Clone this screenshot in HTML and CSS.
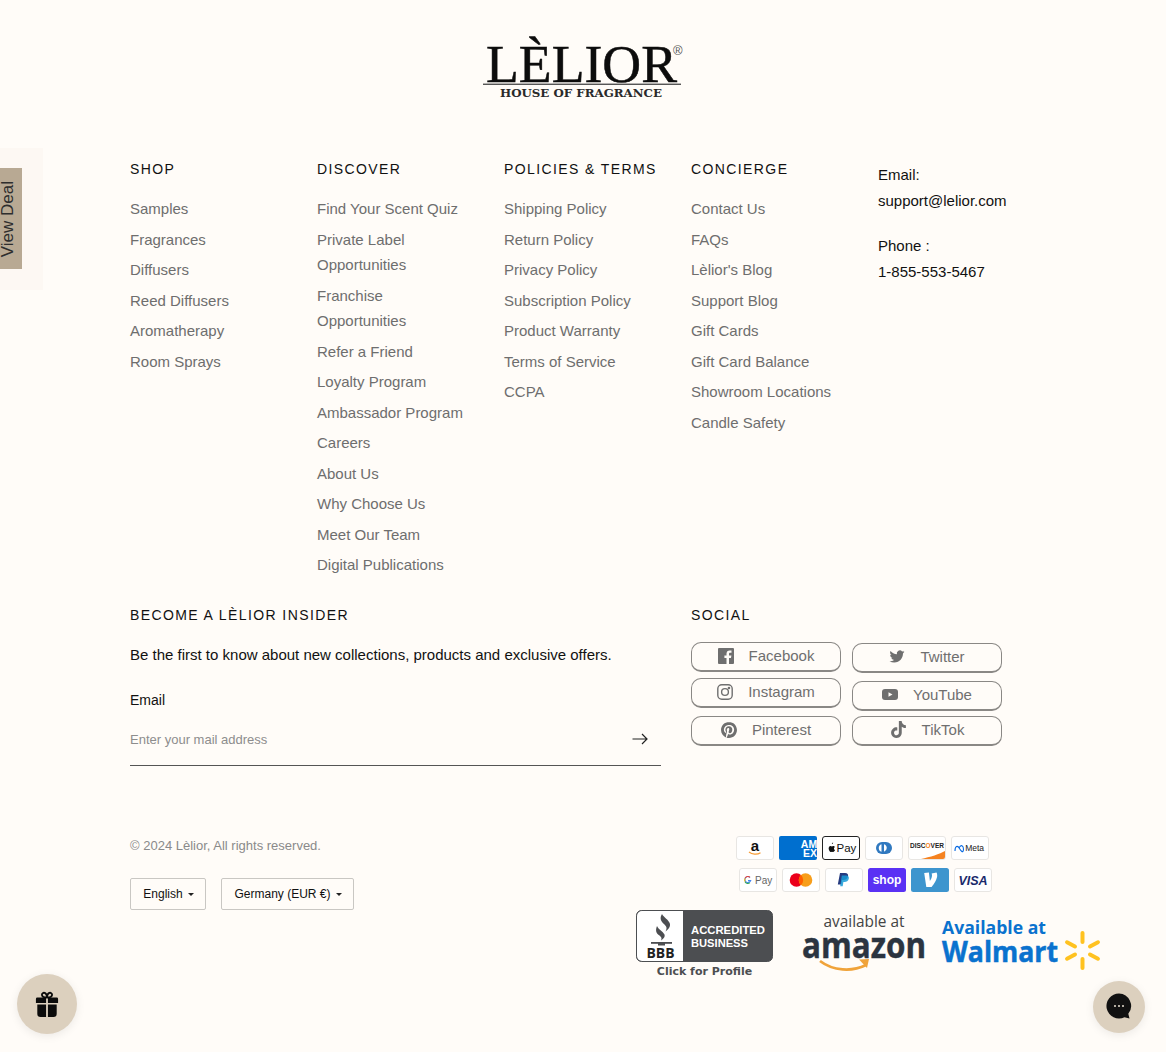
FILE: index.html
```html
<!DOCTYPE html>
<html lang="en">
<head>
<meta charset="utf-8">
<title>Lèlior footer</title>
<link rel="stylesheet" href="styles.css">
</head>
<body>
<footer class="footer">
  <div class="logo-row">
    <svg class="logo" width="204" height="64" viewBox="0 0 204 64">
      <text class="logo-main" x="5" y="46" textLength="191" lengthAdjust="spacingAndGlyphs">LÈLIOR</text>
      <text class="logo-reg" x="192" y="19">®</text>
      <rect x="2" y="47.600" width="198" height="1.300" fill="#444"/>
      <text class="logo-sub" x="19" y="61" textLength="162" lengthAdjust="spacingAndGlyphs">HOUSE OF FRAGRANCE</text>
    </svg>
  </div>

  <div class="columns">
    <nav class="col">
      <h3>SHOP</h3>
      <ul>
        <li>Samples</li><li>Fragrances</li><li>Diffusers</li><li>Reed Diffusers</li><li>Aromatherapy</li><li>Room Sprays</li>
      </ul>
    </nav>
    <nav class="col">
      <h3>DISCOVER</h3>
      <ul>
        <li>Find Your Scent Quiz</li><li>Private Label<br>Opportunities</li><li>Franchise<br>Opportunities</li><li>Refer a Friend</li><li>Loyalty Program</li><li>Ambassador Program</li><li>Careers</li><li>About Us</li><li>Why Choose Us</li><li>Meet Our Team</li><li>Digital Publications</li>
      </ul>
    </nav>
    <nav class="col">
      <h3>POLICIES &amp; TERMS</h3>
      <ul>
        <li>Shipping Policy</li><li>Return Policy</li><li>Privacy Policy</li><li>Subscription Policy</li><li>Product Warranty</li><li>Terms of Service</li><li>CCPA</li>
      </ul>
    </nav>
    <nav class="col">
      <h3>CONCIERGE</h3>
      <ul>
        <li>Contact Us</li><li>FAQs</li><li>Lèlior's Blog</li><li>Support Blog</li><li>Gift Cards</li><li>Gift Card Balance</li><li>Showroom Locations</li><li>Candle Safety</li>
      </ul>
    </nav>
    <div class="col contact">
      <p>Email:<br>support@lelior.com</p>
      <p>Phone :<br>1-855-553-5467</p>
    </div>
  </div>

  <div class="insider-row">
    <section class="insider">
      <h3>BECOME A LÈLIOR INSIDER</h3>
      <p class="insider-text">Be the first to know about new collections, products and exclusive offers.</p>
      <div class="email-label">Email</div>
      <div class="email-field">
        <span class="placeholder">Enter your mail address</span>
        <svg width="16" height="12" viewBox="0 0 16 12" fill="none" stroke="#222" stroke-width="1.2"><path d="M0.5 6H15M10 1l5 5-5 5"/></svg>
      </div>
    </section>
    <section class="social">
      <h3>SOCIAL</h3>
      <div class="social-cols">
        <div class="social-col">
          <div class="sbtn">
            <svg width="16" height="16" viewBox="0 0 16 16"><path fill="#6f6f6f" d="M0 1a1 1 0 011-1h14a1 1 0 011 1v14a1 1 0 01-1 1h-4V10h2l.4-2.5H11V6c0-.8.3-1.2 1.2-1.2h1.3V2.5c-.4 0-1-.1-1.8-.1-2 0-3.2 1.2-3.2 3.3v1.8H6.400V10h2.100v6H1a1 1 0 01-1-1z"/></svg>
            <span>Facebook</span>
          </div>
          <div class="sbtn sbtn-second">
            <svg width="16" height="16" viewBox="0 0 16 16" fill="none" stroke="#6f6f6f" stroke-width="1.4"><rect x=".8" y=".8" width="14.400" height="14.400" rx="4"/><circle cx="8" cy="8" r="3.400"/><circle cx="12" cy="4" r=".6" fill="#6f6f6f"/></svg>
            <span>Instagram</span>
          </div>
          <div class="sbtn sbtn-third">
            <svg width="16" height="16" viewBox="0 0 24 24"><path fill="#6f6f6f" d="M12.017 0C5.396 0 .029 5.367.029 11.987c0 5.079 3.158 9.417 7.618 11.162-.105-.949-.199-2.403.041-3.439.219-.937 1.406-5.957 1.406-5.957s-.359-.72-.359-1.781c0-1.663.967-2.911 2.168-2.911 1.024 0 1.518.769 1.518 1.688 0 1.029-.653 2.567-.992 3.992-.285 1.193.6 2.165 1.775 2.165 2.128 0 3.768-2.245 3.768-5.487 0-2.861-2.063-4.869-5.008-4.869-3.41 0-5.409 2.562-5.409 5.199 0 1.033.394 2.143.889 2.741.099.12.112.225.085.345-.09.375-.293 1.199-.334 1.363-.053.225-.172.271-.401.165-1.495-.69-2.433-2.878-2.433-4.646 0-3.776 2.748-7.252 7.92-7.252 4.158 0 7.392 2.967 7.392 6.923 0 4.135-2.607 7.462-6.233 7.462-1.214 0-2.354-.629-2.758-1.379l-.749 2.848c-.269 1.045-1.004 2.352-1.498 3.146 1.123.345 2.306.535 3.55.535 6.607 0 11.985-5.365 11.985-11.987C23.97 5.39 18.592.026 11.985.026L12.017 0z"/></svg>
            <span>Pinterest</span>
          </div>
        </div>
        <div class="social-col social-col-right">
          <div class="sbtn">
            <svg width="16" height="15" viewBox="0 0 24 24"><path fill="#6f6f6f" d="M23.953 4.57a10 10 0 01-2.825.775 4.958 4.958 0 002.163-2.723c-.951.555-2.005.959-3.127 1.184a4.92 4.92 0 00-8.384 4.482C7.69 8.095 4.067 6.13 1.64 3.162a4.822 4.822 0 00-.666 2.475c0 1.71.87 3.213 2.188 4.096a4.904 4.904 0 01-2.228-.616v.06a4.923 4.923 0 003.946 4.827 4.996 4.996 0 01-2.212.085 4.936 4.936 0 004.604 3.417 9.867 9.867 0 01-6.102 2.105c-.39 0-.779-.023-1.17-.067a13.995 13.995 0 007.557 2.209c9.053 0 13.998-7.496 13.998-13.985 0-.21 0-.42-.015-.63A9.935 9.935 0 0024 4.59z"/></svg>
            <span>Twitter</span>
          </div>
          <div class="sbtn sbtn-yt">
            <svg width="16" height="11" viewBox="0 0 16 11"><rect width="16" height="11" rx="3" fill="#6f6f6f"/><path d="M6.500 3.200v4.600L10.500 5.500z" fill="#fffcf8"/></svg>
            <span>YouTube</span>
          </div>
          <div class="sbtn sbtn-tt">
            <svg width="17" height="17" viewBox="0 0 24 24"><path fill="#6f6f6f" d="M12.525.02c1.31-.02 2.61-.01 3.91-.02.08 1.53.63 3.09 1.75 4.17 1.12 1.11 2.7 1.62 4.24 1.79v4.03c-1.44-.05-2.89-.35-4.2-.97-.57-.26-1.1-.59-1.62-.93-.01 2.92.01 5.84-.02 8.75-.08 1.4-.54 2.79-1.35 3.94-1.31 1.92-3.58 3.17-5.91 3.21-1.43.08-2.86-.31-4.08-1.03-2.02-1.19-3.44-3.37-3.65-5.71-.02-.5-.03-1-.01-1.49.18-1.9 1.12-3.72 2.58-4.96 1.66-1.44 3.98-2.13 6.15-1.72.02 1.48-.04 2.96-.04 4.44-.99-.32-2.15-.23-3.02.37-.63.41-1.11 1.04-1.36 1.75-.21.51-.15 1.07-.14 1.61.24 1.64 1.82 3.02 3.5 2.87 1.12-.01 2.19-.66 2.77-1.61.19-.33.4-.67.41-1.06.1-1.79.06-3.57.07-5.36.01-4.03-.01-8.05.02-12.07z"/></svg>
            <span>TikTok</span>
          </div>
        </div>
      </div>
    </section>
  </div>

  <div class="bottom">
    <div class="legal">
      <div class="copyright">© 2024 Lèlior, All rights reserved.</div>
      <div class="selects">
        <div class="select select-lang">English <i class="caret"></i></div>
        <div class="select select-country">Germany (EUR €) <i class="caret"></i></div>
      </div>
    </div>
    <div class="trust">
      <div class="pay-row">
        <svg class="pay" viewBox="0 0 38 24"><rect class="card" x=".5" y=".5" width="37" height="23" rx="2.500"/><text x="19" y="14.500" class="t-amz">a</text><path d="M13 16c3 2.500 8 3 11.500.8" fill="none" stroke="#f79c34" stroke-width="1.300"/></svg>
        <svg class="pay" viewBox="0 0 38 24"><rect width="38" height="24" rx="2" fill="#006fcf"/><text x="30" y="12" class="t-amex">AM</text><text x="31" y="21" class="t-amex">EX</text></svg>
        <svg class="pay" viewBox="0 0 38 24"><rect x=".5" y=".5" width="37" height="23" rx="2.500" fill="#fff" stroke="#222"/><path d="M10.200 8.100c.5-.1 1-.7.9-1.500-.7.100-1.300.7-1.200 1.500zm1.800 4.300c0-1 .8-1.400.9-1.500-.5-.7-1.200-.8-1.500-.8-.6-.1-1.200.4-1.500.4-.3 0-.8-.4-1.300-.4-.7 0-1.300.4-1.600 1-.7 1.200-.2 3 .5 3.900.3.500.7 1 1.200 1 .5 0 .7-.3 1.300-.3.600 0 .7.3 1.300.3.500 0 .9-.5 1.200-.9.400-.5.500-1 .5-1 0 0-1-.4-1-1.700z" fill="#111"/><text x="14.500" y="16" class="t-apple">Pay</text></svg>
        <svg class="pay" viewBox="0 0 38 24"><rect class="card" x=".5" y=".5" width="37" height="23" rx="2.500"/><path d="M17 6h4a6 6 0 010 12h-4a6 6 0 010-12z" fill="#3079c0"/><path d="M16.500 8.200v7.600a4 4 0 010-7.600zm2.500 0a4 4 0 010 7.600z" fill="#fff"/></svg>
        <svg class="pay" viewBox="0 0 38 24"><rect class="card" x=".5" y=".5" width="37" height="23" rx="2.500"/><path d="M13 23C22 21 32 18 37 15v6a2 2 0 01-2 2z" fill="#f58220"/><text x="19" y="11.500" class="t-disc" textLength="34" lengthAdjust="spacingAndGlyphs">DISC<tspan fill="#f58220">O</tspan>VER</text></svg>
        <svg class="pay" viewBox="0 0 38 24"><rect class="card" x=".5" y=".5" width="37" height="23" rx="2.500"/><path d="M4 15c0-5 2.500-6 4.500-2.500s3.500 4.500 4 1c0-4-2.500-5.500-4.500-1.500" fill="none" stroke="#0668e1" stroke-width="1.100"/><text x="14.200" y="15.200" class="t-meta">Meta</text></svg>
      </div>
      <div class="pay-row pay-row-two">
        <svg class="pay" viewBox="0 0 38 24"><rect class="card" x=".5" y=".5" width="37" height="23" rx="2.500"/><path d="M11 9.400a3 3 0 10.700 3.200H9" fill="none" stroke="#4285f4" stroke-width="1.100"/><path d="M6.100 10.200a3 3 0 014.900-.8" fill="none" stroke="#ea4335" stroke-width="1.100"/><path d="M6 13.800a3 3 0 004.900.800" fill="none" stroke="#34a853" stroke-width="1.100"/><path d="M5.800 10.500v3" fill="none" stroke="#fbbc04" stroke-width="1.100"/><text x="16" y="15.800" class="t-gpay">Pay</text></svg>
        <svg class="pay" viewBox="0 0 38 24"><rect class="card" x=".5" y=".5" width="37" height="23" rx="2.500"/><circle cx="14.500" cy="12" r="6.800" fill="#eb001b"/><circle cx="23.500" cy="12" r="6.800" fill="#f79e1b"/><path d="M19 7a6.800 6.800 0 010 10 6.800 6.800 0 010-10z" fill="#ff5f00"/></svg>
        <svg class="pay" viewBox="0 0 38 24"><rect class="card" x=".5" y=".5" width="37" height="23" rx="2.500"/><path d="M15 5h5c2.500 0 3.500 1.500 3 3.500-.6 2.500-2.500 3.500-4.500 3.500h-1.500l-.8 4.500h-3.400z" fill="#253b80"/><path d="M16.800 7.500h4.500c2 0 3 1.300 2.500 3.200-.6 2.300-2.300 3.300-4.200 3.300h-1.200l-.7 4.200h-2.500z" fill="#179bd7" opacity=".85"/></svg>
        <svg class="pay" viewBox="0 0 38 24"><rect width="38" height="24" rx="2.500" fill="#5a31f4"/><text x="19" y="15.500" class="t-shop">shop</text></svg>
        <svg class="pay" viewBox="0 0 38 24"><rect width="38" height="24" rx="2.500" fill="#3d95ce"/><path d="M24.500 6.500c.5.900.7 1.800.7 2.900 0 3.600-3.100 8.300-5.600 11.600h-5.300L12.200 7l4.700-.4 1 8.500c1-1.600 2.100-4 2.100-5.700 0-.9-.2-1.500-.4-2z" fill="#fff" transform="translate(1 -2)"/></svg>
        <svg class="pay" viewBox="0 0 38 24"><rect class="card" x=".5" y=".5" width="37" height="23" rx="2.500"/><text x="19" y="16.500" class="t-visa">VISA</text></svg>
      </div>
      <div class="badges">
        <div class="bbb">
          <svg width="137" height="52" viewBox="0 0 137 52">
            <rect x=".5" y=".5" width="136" height="51" rx="5" fill="#4c4e51" stroke="#4c4e51"/>
            <path d="M1 6a5 5 0 015-5h41v50H6a5 5 0 01-5-5z" fill="#fff"/>
            <path d="M26 4c1.500 3 7 6 8 10 .5 3-1.500 5-4.500 7.500 1.500-3 1.500-4.500-1-7C24.500 11 23.500 8 26 4zM21 16c1 3 6 5.500 7.500 8.500.8 2-.5 4-3.500 6 1-2 .5-3.500-1.500-5C20.500 23.500 19 21 21 16z" fill="#4c4e51"/>
            <rect x="15" y="32" width="21" height="1.800" fill="#4c4e51"/><rect x="22" y="33" width="7" height="2.500" fill="#4c4e51"/>
            <text x="24.500" y="48" class="t-bbb" textLength="28" lengthAdjust="spacingAndGlyphs">BBB</text>
            <text x="55" y="24" class="t-acc" textLength="74" lengthAdjust="spacingAndGlyphs">ACCREDITED</text>
            <text x="55" y="37" class="t-acc" textLength="57" lengthAdjust="spacingAndGlyphs">BUSINESS</text>
          </svg>
          <div class="bbb-cap">Click for Profile</div>
        </div>
        <svg class="amazon" width="124" height="64" viewBox="0 0 124 64">
          <text x="62" y="14" class="t-avail" textLength="81" lengthAdjust="spacingAndGlyphs">available at</text>
          <text x="62" y="45" class="t-amazon" textLength="124" lengthAdjust="spacingAndGlyphs">amazon</text>
          <path d="M18 48c13 10 32 11 46 4" fill="none" stroke="#f0a33a" stroke-width="2.800"/>
          <path d="M57 46.500l10-.5-2 9z" fill="#f0a33a"/>
        </svg>
        <svg class="walmart" width="160" height="54" viewBox="0 0 160 54">
          <text x="0" y="15.500" class="t-wa" textLength="104" lengthAdjust="spacingAndGlyphs">Available at</text>
          <text x="0" y="44" class="t-wm" textLength="116" lengthAdjust="spacingAndGlyphs">Walmart</text>
          <g fill="#ffc220">
            <rect x="138.500" y="13" width="4" height="13" rx="2"/>
            <rect x="138.500" y="39" width="4" height="13" rx="2"/>
            <rect x="138.500" y="13" width="4" height="13" rx="2" transform="rotate(62 140.500 32.500)"/>
            <rect x="138.500" y="13" width="4" height="13" rx="2" transform="rotate(118 140.500 32.500)"/>
            <rect x="138.500" y="13" width="4" height="13" rx="2" transform="rotate(242 140.500 32.500)"/>
            <rect x="138.500" y="13" width="4" height="13" rx="2" transform="rotate(298 140.500 32.500)"/>
          </g>
        </svg>
      </div>
    </div>
  </div>
</footer>

<aside class="deal-panel">
  <div class="deal-tab"><span>View Deal</span></div>
</aside>
<button class="gift" type="button" aria-label="Rewards">
  <svg width="24" height="28" viewBox="0 0 26 30"><path fill="#0b0b0b" d="M1 9.500A1.500 1.500 0 012.500 8H12v6H1zM14 8h9.500A1.500 1.500 0 0125 9.500V14H14zM2.500 15.500H12V29H6a3.500 3.500 0 01-3.500-3.500zM14 15.500h9.500v10A3.500 3.500 0 0120 29h-6z"/><path fill="none" stroke="#0b0b0b" stroke-width="2" d="M13 8C10 8 7.500 7 7.500 5 7.500 3.500 9 2.500 10.500 3c1.500.6 2.500 3 2.500 5zm0 0c3 0 5.500-1 5.500-3 0-1.500-1.500-2.500-3-2-1.500.6-2.500 3-2.500 5z"/></svg>
</button>
<button class="chat" type="button" aria-label="Chat">
  <svg width="26" height="26" viewBox="0 0 26 26"><path fill="#111" d="M13 .5a12.500 12.500 0 1 0 5.500 23.700l5 1.300-1.200-4.700A12.500 12.500 0 0 0 13 .5z"/><circle cx="9" cy="13" r="1" fill="#e8e0d2"/><circle cx="13" cy="13" r="1" fill="#e8e0d2"/><circle cx="17" cy="13" r="1" fill="#e8e0d2"/></svg>
</button>
</body>
</html>
```

FILE: styles.css
```css
* { box-sizing: border-box; }
html, body { margin: 0; padding: 0; }
body {
  width: 1166px;
  height: 1052px;
  overflow: hidden;
  background: #fffcf8;
  font-family: "Liberation Sans", Arial, sans-serif;
  color: #111;
  position: relative;
}
.footer { display: flex; flex-direction: column; padding: 36px 0 0 130px; }
.logo-row { display: flex; justify-content: center; padding-right: 130px; height: 64px; }
.logo { display: block; overflow: visible; }
.logo-main { font-family: "Liberation Serif", serif; font-size: 53px; fill: #0c0c0c; stroke: #0c0c0c; stroke-width: .5px; }
.logo-reg { font-family: "Liberation Sans", sans-serif; font-size: 13px; fill: #555; }
.logo-sub { font-family: "DejaVu Serif", serif; font-weight: 700; font-size: 11.500px; fill: #2a2a2a; }

h3 { margin: 0; font-weight: 400; font-size: 14px; line-height: 18px; letter-spacing: 1.4px; color: #111; }
.columns { display: flex; margin-top: 60px; height: 446px; }
.col { width: 187px; flex: none; }
.col ul { list-style: none; margin: 18px 0 0; padding: 0; display: flex; flex-direction: column; gap: 5px; }
.col li { font-size: 15px; line-height: 25.500px; color: #6e6e6e; }
.contact { padding-top: 2px; }
.contact p { margin: 0 0 19px; font-size: 15px; line-height: 26px; color: #111; }

.insider-row { display: flex; }
.insider { width: 531px; flex: none; }
.insider-text { margin: 21px 0 0; font-size: 15px; line-height: 20px; }
.email-label { margin-top: 26px; font-size: 14px; line-height: 18px; }
.email-field {
  margin-top: 10px; height: 47px; display: flex; align-items: center; justify-content: space-between;
  padding: 0 13px 6px 0; border-bottom: 1px solid #555;
}
.placeholder { font-size: 13px; color: #8d8d8d; }
.social { margin-left: 30px; }
.social-cols { display: flex; gap: 11px; margin-top: 18px; }
.social-col { display: flex; flex-direction: column; width: 150px; }
.social-col-right { padding-top: 1px; }
.sbtn {
  height: 30px; display: flex; align-items: center; justify-content: center; gap: 15px;
  padding-bottom: 2px;
  border: 1px solid #8a8885; border-bottom-width: 2px; border-radius: 10px;
  font-size: 15px; color: #6f6f6f;
}
.sbtn-second { margin-top: 6px; }
.sbtn-third { margin-top: 8px; }
.sbtn-yt { margin-top: 8px; }
.sbtn-tt { margin-top: 5px; }

.bottom { display: flex; margin-top: 70px; }
.legal { width: 506px; flex: none; padding-top: 2px; }
.copyright { font-size: 13px; line-height: 16px; color: #8a8a8a; }
.selects { display: flex; gap: 15px; margin-top: 24px; }
.select {
  height: 32px; display: flex; align-items: center; justify-content: center; gap: 5px;
  padding-left: 1px;
  border: 1px solid #c9c7c3; border-radius: 2px; font-size: 12px; color: #111;
}
.select-lang { width: 76px; }
.select-country { width: 133px; }
.caret { width: 0; height: 0; border: 3px solid transparent; border-top: 3.500px solid #222; border-bottom: 0; }

.trust { display: flex; flex-direction: column; }
.pay-row { display: flex; gap: 5px; padding-left: 100px; }
.pay-row-two { padding-left: 103px; margin-top: 8px; }
.pay { width: 38px; height: 24px; display: block; flex: none; }
.card { fill: #fff; stroke: #e8e6e3; }
.t-amz { font: 700 15px "Liberation Sans", sans-serif; text-anchor: middle; fill: #111; }
.t-amex { font: 700 10.500px "Liberation Sans", sans-serif; text-anchor: middle; fill: #fff; }
.t-apple { font: 400 11.500px "Liberation Sans", sans-serif; fill: #111; }
.t-disc { font: 700 7px "Liberation Sans", sans-serif; text-anchor: middle; fill: #222; }
.t-meta { font: 400 8.500px "Liberation Sans", sans-serif; fill: #222; }
.t-gpay { font: 400 10px "Liberation Sans", sans-serif; fill: #666; }
.t-shop { font: 700 12px "Liberation Sans", sans-serif; text-anchor: middle; fill: #fff; }
.t-visa { font: italic 700 12.500px "Liberation Sans", sans-serif; text-anchor: middle; fill: #1a2a6c; }

.badges { display: flex; align-items: flex-start; margin-top: 18px; }
.bbb { width: 137px; flex: none; display: flex; flex-direction: column; align-items: center; }
.bbb svg { display: block; }
.bbb-cap { font: 700 11px/14px "DejaVu Sans", sans-serif; color: #4c4e51; margin-top: 3px; }
.t-bbb { font: 700 14px "Open Sans", sans-serif; text-anchor: middle; fill: #222; }
.t-acc { font: 700 11px "Liberation Sans", sans-serif; fill: #fff; }
.amazon { margin: 3px 0 0 29px; flex: none; display: block; overflow: visible; }
.t-avail { font: 400 16px "Open Sans", sans-serif; text-anchor: middle; fill: #444; }
.t-amazon { font: 700 36px "Open Sans", sans-serif; text-anchor: middle; fill: #2b3440; stroke: #2b3440; stroke-width: .5px; }
.walmart { margin: 8px 0 0 16px; flex: none; display: block; overflow: visible; }
.t-wa { font: 700 18px "Open Sans", sans-serif; fill: #0a72ce; }
.t-wm { font: 700 29px "Open Sans", sans-serif; fill: #0a72ce; stroke: #0a72ce; stroke-width: .5px; }

.deal-panel { position: absolute; left: 0; top: 148px; width: 43px; height: 142px; background: #fdf8f3; padding-top: 20px; }
.deal-tab { width: 22px; height: 101px; padding-top: 1px; background: #b8a993; display: flex; align-items: center; justify-content: flex-end; }
.deal-tab span { writing-mode: vertical-rl; transform: rotate(180deg); font-size: 17px; line-height: 18px; color: #2e2e2e; white-space: nowrap; margin-right: 5px; }
.gift, .chat { position: absolute; border: 0; padding: 0; border-radius: 50%; background: #dcd0be; display: flex; align-items: center; justify-content: center; box-shadow: 0 2px 10px rgba(0,0,0,.08); }
.gift { left: 17px; top: 974px; width: 60px; height: 60px; }
.chat { left: 1093px; top: 981px; width: 52px; height: 52px; padding-bottom: 3px; }
```
